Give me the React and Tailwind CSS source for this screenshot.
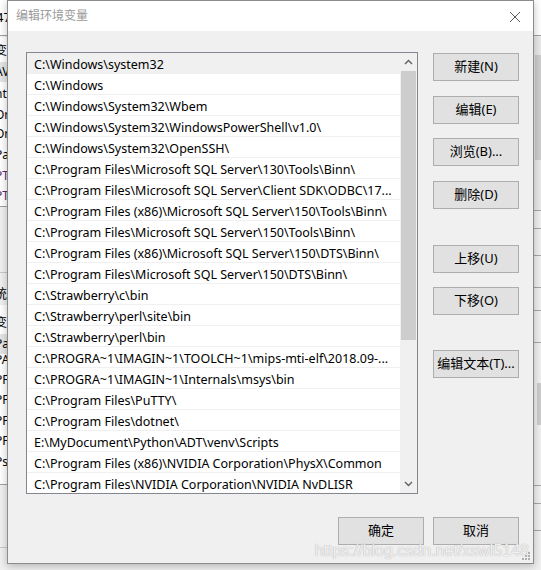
import React from "react";

const rows = [
  "C:\\Windows\\system32",
  "C:\\Windows",
  "C:\\Windows\\System32\\Wbem",
  "C:\\Windows\\System32\\WindowsPowerShell\\v1.0\\",
  "C:\\Windows\\System32\\OpenSSH\\",
  "C:\\Program Files\\Microsoft SQL Server\\130\\Tools\\Binn\\",
  "C:\\Program Files\\Microsoft SQL Server\\Client SDK\\ODBC\\17...",
  "C:\\Program Files (x86)\\Microsoft SQL Server\\150\\Tools\\Binn\\",
  "C:\\Program Files\\Microsoft SQL Server\\150\\Tools\\Binn\\",
  "C:\\Program Files (x86)\\Microsoft SQL Server\\150\\DTS\\Binn\\",
  "C:\\Program Files\\Microsoft SQL Server\\150\\DTS\\Binn\\",
  "C:\\Strawberry\\c\\bin",
  "C:\\Strawberry\\perl\\site\\bin",
  "C:\\Strawberry\\perl\\bin",
  "C:\\PROGRA~1\\IMAGIN~1\\TOOLCH~1\\mips-mti-elf\\2018.09-...",
  "C:\\PROGRA~1\\IMAGIN~1\\Internals\\msys\\bin",
  "C:\\Program Files\\PuTTY\\",
  "C:\\Program Files\\dotnet\\",
  "E:\\MyDocument\\Python\\ADT\\venv\\Scripts",
  "C:\\Program Files (x86)\\NVIDIA Corporation\\PhysX\\Common",
  "C:\\Program Files\\NVIDIA Corporation\\NVIDIA NvDLISR",
];

const sideButtons = [
  { label: "新建(N)", mt: "mt-0" },
  { label: "编辑(E)", mt: "mt-[15px]" },
  { label: "浏览(B)...", mt: "mt-[14px]" },
  { label: "删除(D)", mt: "mt-[15px]" },
  { label: "上移(U)", mt: "mt-[36px]" },
  { label: "下移(O)", mt: "mt-[14px]" },
  { label: "编辑文本(T)...", mt: "mt-[35px]" },
];

function Btn({ label, className = "" }) {
  return (
    <div
      className={`flex h-[28px] w-[86px] shrink-0 items-center justify-center border border-[#adadad] bg-[#e1e1e1] text-[13px] text-[#000] ${className}`}
    >
      {label}
    </div>
  );
}

function LeftBackdrop() {
  const top = [
    { t: "变", y: 41 },
    { t: "AV", y: 62, hl: true },
    { t: "nt", y: 84 },
    { t: "Or", y: 105 },
    { t: "Or", y: 124 },
    { t: "Pa", y: 145 },
    { t: "PT", y: 166, c: "text-[#5a2a6a]" },
    { t: "PT", y: 186, c: "text-[#5a2a6a]" },
  ];
  const bottom = [
    { t: "变", y: 313 },
    { t: "Pa", y: 334, hl: true },
    { t: "PA", y: 350 },
    { t: "PF", y: 370 },
    { t: "PF", y: 390 },
    { t: "PF", y: 411 },
    { t: "PF", y: 431 },
    { t: "Ps", y: 452 },
  ];
  return (
    <div className="absolute left-0 top-0 h-[570px] w-[8px] overflow-hidden bg-[#f0f0f0]">
      <div className="absolute left-0 top-0 h-[36px] w-full border-b border-[#a0a0a0] bg-white" />
      <div className="absolute left-[-4px] top-[8px] text-[13px] leading-[18px] text-black">47</div>
      <div className="absolute left-0 top-[37px] h-[170px] w-full border-b border-[#a0a0a0] bg-white" />
      <div className="absolute left-0 top-[305px] h-[180px] w-full border-b border-[#a0a0a0] bg-white" />
      <div className="absolute left-0 top-[272px] h-px w-full bg-[#c8c8c8]" />
      <div className="absolute left-0 top-[547px] h-px w-full bg-[#c8c8c8]" />
      {[...top, ...bottom].map((r, i) => (
        <div
          key={i}
          className={`absolute left-[-5px] h-[20px] w-[14px] text-[12px] leading-[20px] ${r.hl ? "bg-[#e5e5e5]" : ""} ${r.c || "text-black"}`}
          style={{ top: r.y }}
        >
          {r.t}
        </div>
      ))}
      <div className="absolute left-[-6px] top-[283px] text-[13px] leading-[20px] text-black">统</div>
    </div>
  );
}

function RightBackdrop() {
  const lines = [210, 228, 255, 287, 310, 342, 485, 503, 530];
  return (
    <div className="absolute right-0 top-0 h-[570px] w-[8px] overflow-hidden bg-[#f0f0f0]">
      <div className="absolute left-0 top-0 h-[36px] w-full border-b border-[#a0a0a0] bg-white" />
      <div className="absolute left-0 top-[37px] h-[173px] w-full bg-[#e9e9e9]" />
      <div className="absolute left-[2px] top-[55px] h-[105px] w-[6px] bg-[#cdcdcd]" />
      <div className="absolute left-[4px] top-[383px] h-[42px] w-[4px] bg-[#cdcdcd]" />
      {lines.map((y) => (
        <div key={y} className="absolute left-0 h-px w-full bg-[#a8a8a8]" style={{ top: y }} />
      ))}
    </div>
  );
}

export default function App() {
  return (
    <div
      className="relative h-[570px] w-[541px] overflow-hidden bg-[#f0f0f0]"
      style={{ fontFamily: '"Noto Sans", "Noto Sans CJK SC", sans-serif' }}
    >
      <LeftBackdrop />
      <RightBackdrop />

      {/* dialog window */}
      <div className="absolute left-[7px] top-0 flex h-[564px] w-[527px] flex-col border border-[#8c8c8c] bg-[#f0f0f0] shadow-[0_2px_8px_rgba(0,0,0,0.25)]">
        {/* title bar */}
        <div className="flex h-[30px] shrink-0 items-center justify-between bg-white pl-[8px] pr-[12px]">
          <span className="text-[12px] text-[#9a9a9a]">编辑环境变量</span>
          <svg width="12" height="12" viewBox="0 0 12 12" className="mt-[1px]">
            <path d="M1 1 L11 11 M11 1 L1 11" stroke="#5a5a5a" strokeWidth="1" fill="none" />
          </svg>
        </div>

        {/* body */}
        <div className="relative flex flex-1 flex-col pl-[18px] pr-[14px] pt-[21px]">
          <div className="flex">
            {/* list box */}
            <div className="flex h-[442px] w-[392px] shrink-0 border border-[#828790] bg-white">
              <div className="flex flex-1 flex-col overflow-hidden">
                {rows.map((r, i) => (
                  <div
                    key={i}
                    className={`flex h-[21px] shrink-0 items-center whitespace-nowrap border-b border-[#f0f0f0] pl-[7px] pt-[4px] text-[12.5px] text-black ${i === 0 ? "bg-[#f0f0f0]" : ""}`}
                  >
                    {r}
                  </div>
                ))}
              </div>
              {/* scrollbar */}
              <div className="flex w-[17px] shrink-0 flex-col bg-[#f0f0f0]">
                <div className="flex h-[18px] items-center justify-center">
                  <svg width="9" height="6" viewBox="0 0 9 6">
                    <path d="M1 5 L4.5 1.5 L8 5" stroke="#606060" strokeWidth="1.4" fill="none" />
                  </svg>
                </div>
                <div className="mx-[1px] h-[269px] bg-[#cdcdcd]" />
                <div className="flex-1" />
                <div className="flex h-[18px] items-center justify-center">
                  <svg width="9" height="6" viewBox="0 0 9 6">
                    <path d="M1 1 L4.5 4.5 L8 1" stroke="#606060" strokeWidth="1.4" fill="none" />
                  </svg>
                </div>
              </div>
            </div>

            {/* side buttons */}
            <div className="ml-[15px] flex flex-col pt-px">
              {sideButtons.map((b) => (
                <Btn key={b.label} label={b.label} className={b.mt} />
              ))}
            </div>
          </div>

          {/* bottom buttons */}
          <div className="mt-[23px] flex justify-end gap-[9px]">
            <Btn label="确定" />
            <Btn label="取消" />
          </div>

          {/* watermark */}
          <div
            className="absolute bottom-[1px] right-[4px] text-[16px] leading-[22px] text-white/85 [text-shadow:0_0_1px_rgba(110,110,110,0.75)]"
            style={{ fontFamily: '"Liberation Sans", Arial, sans-serif' }}
          >
            https://blog.csdn.net/xswl5148
          </div>

          {/* resize grip */}
          <svg width="10" height="10" viewBox="0 0 10 10" className="absolute bottom-[2px] right-[2px]">
            {[
              [8, 2],
              [5, 5],
              [8, 5],
              [2, 8],
              [5, 8],
              [8, 8],
            ].map(([x, y], i) => (
              <rect key={i} x={x - 1} y={y - 1} width="2" height="2" fill="#b0b0b0" />
            ))}
          </svg>
        </div>
      </div>
    </div>
  );
}
